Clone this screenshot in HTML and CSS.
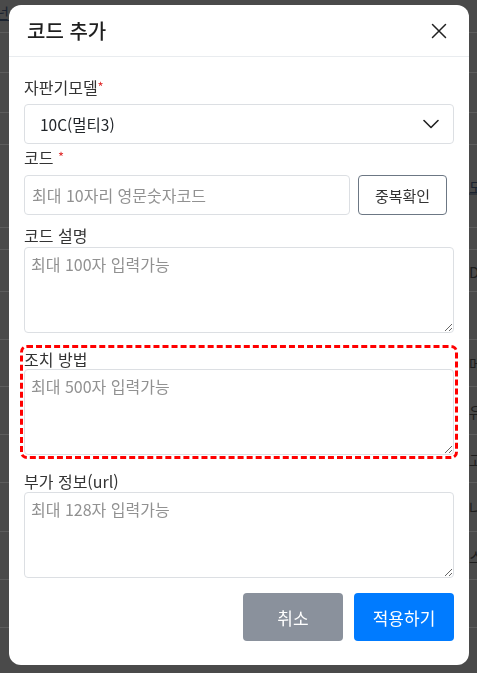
FILE: index.html
```html
<!DOCTYPE html>
<html lang="ko">
<head>
<meta charset="utf-8">
<title>코드 추가</title>
<link rel="stylesheet" href="styles.css">
</head>
<body>
<div class="page">
  <div class="row r1"><span class="frag-l link">넌</span></div>
  <div class="row r2"></div>
  <div class="row r3"></div>
  <div class="row r4"></div>
  <div class="row r5"><span class="frag-r link">모</span></div>
  <div class="row r6"></div>
  <div class="row r7"><span class="frag-r">D</span></div>
  <div class="row r8"></div>
  <div class="row r9"><span class="frag-r">메</span></div>
  <div class="row r10"><span class="frag-r">유</span></div>
  <div class="row r11"><span class="frag-r">고</span></div>
  <div class="row r12"><span class="frag-r">나</span></div>
  <div class="row r13"><span class="frag-r">스</span></div>
  <div class="row r14"></div>
</div>

<div class="overlay">
  <div class="modal">
    <div class="modal-header">
      <h2 class="modal-title">코드 추가</h2>
      <button class="close" type="button" aria-label="닫기">
        <svg width="16" height="16" viewBox="0 0 16 16"><path d="M1.5 1.5L14.5 14.5M14.5 1.5L1.5 14.5" stroke="#222" stroke-width="1.5" fill="none" stroke-linecap="round"/></svg>
      </button>
    </div>
    <div class="modal-body">
      <div class="group g1">
        <label class="label">자판기모델<span class="req">*</span></label>
        <div class="select">
          <span>10C(멀티3)</span>
          <svg width="16" height="10" viewBox="0 0 16 10"><path d="M1 1.5L8 8.5L15 1.5" stroke="#222" stroke-width="1.6" fill="none" stroke-linecap="round" stroke-linejoin="round"/></svg>
        </div>
      </div>
      <div class="group g2">
        <label class="label">코드 <span class="req">*</span></label>
        <div class="inline">
          <input class="input" type="text" placeholder="최대 10자리 영문숫자코드">
          <button class="btn-outline" type="button">중복확인</button>
        </div>
      </div>
      <div class="group g3">
        <label class="label">코드 설명</label>
        <textarea class="textarea" placeholder="최대 100자 입력가능"></textarea>
      </div>
      <div class="group g4 highlight">
        <label class="label">조치 방법</label>
        <textarea class="textarea" placeholder="최대 500자 입력가능"></textarea>
      </div>
      <div class="group g5">
        <label class="label">부가 정보(url)</label>
        <textarea class="textarea" placeholder="최대 128자 입력가능"></textarea>
      </div>
      <div class="actions">
        <button class="btn btn-cancel" type="button">취소</button>
        <button class="btn btn-apply" type="button">적용하기</button>
      </div>
    </div>
  </div>
</div>
</body>
</html>
```

FILE: styles.css
```css
* { box-sizing: border-box; }

html, body {
  margin: 0;
  padding: 0;
  height: 100%;
  overflow: hidden;
}

body {
  background: #4a4a4a;
  font-family: "Noto Sans CJK KR", "Noto Sans", sans-serif;
  color: #212529;
}

/* background page (dimmed) */
.page {
  display: flex;
  flex-direction: column;
}
.row {
  position: relative;
  border-bottom: 1px solid #5d5d5d;
  font-size: 15px;
  color: #1e1e1e;
}
.r1 { height: 33px; }
.r2 { height: 40px; }
.r3 { height: 40px; }
.r4 { height: 32px; }
.r5 { height: 83px; }
.r6 { height: 22px; }
.r7 { height: 42px; }
.r8 { height: 48px; }
.r9 { height: 47px; }
.r10 { height: 48px; }
.r11 { height: 48px; }
.r12 { height: 49px; }
.r13 { height: 48px; }
.r14 { height: 48px; }

.frag-l {
  position: absolute;
  right: calc(100% - 9px);
  top: 2px;
}
.frag-r {
  position: absolute;
  left: 469px;
  top: 50%;
  transform: translateY(-50%);
}
.link { text-decoration: underline; color: #1b2330; }

/* modal */
.overlay {
  position: fixed;
  inset: 0;
}
.modal {
  margin: 5px 0 0 9px;
  width: 460px;
  height: 660px;
  background: #fff;
  border-radius: 12px;
  overflow: hidden;
}
.modal-header {
  height: 52px;
  border-bottom: 1px solid #e9ecef;
  display: flex;
  align-items: center;
  justify-content: space-between;
  padding: 0 22px 0 18px;
}
.modal-title {
  margin: 0;
  font-size: 20px;
  font-weight: 500;
  line-height: 1;
  color: #1f1f1f;
}
.close {
  border: 0;
  background: none;
  padding: 0;
  margin: 0;
  width: 16px;
  height: 16px;
  display: flex;
}

.modal-body {
  padding: 20px 15px 0 15px;
  display: flex;
  flex-direction: column;
}

.group { display: flex; flex-direction: column; }
.label {
  display: block;
  height: 20px;
  font-size: 16px;
  line-height: 20px;
  color: #333;
}
.req { color: #e03131; font-size: 13px; line-height: 20px; vertical-align: top; }

.g1 .label { margin-bottom: 7px; }
.g2 { margin-top: 3px; }
.g2 .label { margin-bottom: 8px; }
.g3 { margin-top: 10px; }
.g3 .label { margin-bottom: 2px; }
.g4 { margin-top: 16px; }
.g5 { margin-top: 16px; }
.g5 .label { margin-bottom: 1px; }

.highlight {
  outline: 3px dashed #ff0000;
  outline-offset: 1px;
  border-radius: 3px;
}

.select {
  height: 40px;
  border: 1px solid #dcdfe3;
  border-radius: 4px;
  display: flex;
  align-items: center;
  justify-content: space-between;
  padding: 0 14px 0 15px;
  font-size: 15.5px;
  color: #212529;
}

.inline { display: flex; align-items: center; }
.input {
  margin: 0;
  width: 326px;
  height: 40px;
  border: 1px solid #dcdfe3;
  border-radius: 4px;
  padding: 0 7px;
  font-family: inherit;
  font-size: 16px;
  color: #212529;
}
.input::placeholder, .textarea::placeholder { color: #919191; }

.btn-outline {
  margin: 0 0 0 8px;
  width: 89px;
  height: 40px;
  background: #fff;
  border: 1px solid #6c7784;
  border-radius: 4px;
  font-family: inherit;
  font-size: 15px;
  color: #333;
}

.textarea {
  display: block;
  margin: 0;
  width: 430px;
  height: 86px;
  border: 1px solid #dcdfe3;
  border-radius: 4px;
  padding: 5px 6px;
  font-family: inherit;
  font-size: 16px;
  line-height: 22px;
  color: #212529;
  resize: vertical;
}

.actions {
  margin-top: 15px;
  display: flex;
  justify-content: flex-end;
  gap: 11px;
}
.btn {
  margin: 0;
  width: 100px;
  height: 48px;
  border: 0;
  border-radius: 4px;
  font-family: inherit;
  font-size: 17px;
  color: #fff;
}
.btn-cancel { background: #8a919c; }
.btn-apply { background: #007bff; }
```
